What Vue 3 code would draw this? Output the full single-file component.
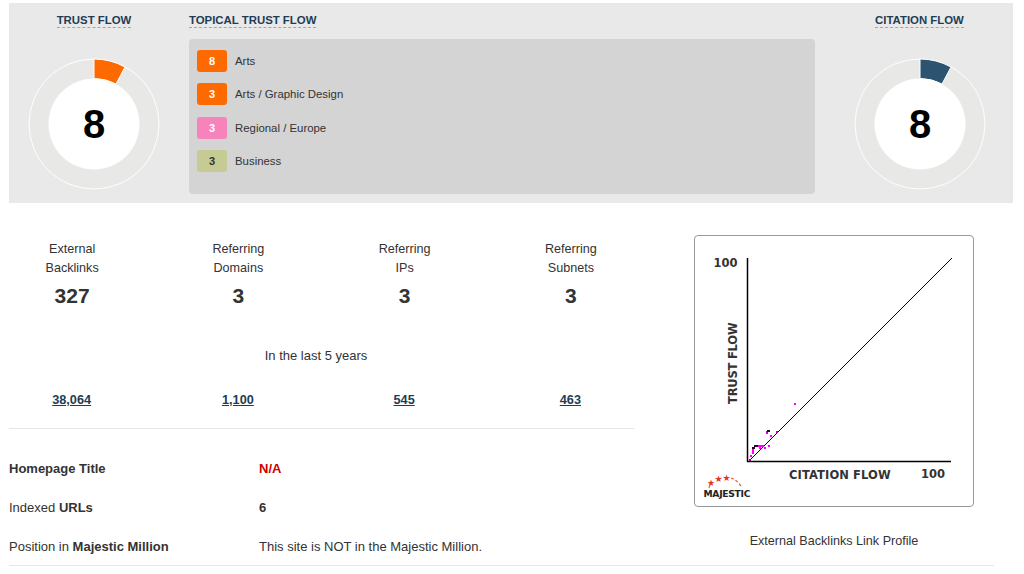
<script setup>
const topics = [
  { n: 8, label: 'Arts', cls: 'orange' },
  { n: 3, label: 'Arts / Graphic Design', cls: 'orange' },
  { n: 3, label: 'Regional / Europe', cls: 'pink' },
  { n: 3, label: 'Business', cls: 'olive' }
]
const stats = [
  { a: 'External', b: 'Backlinks', v: '327', old: '38,064' },
  { a: 'Referring', b: 'Domains', v: '3', old: '1,100' },
  { a: 'Referring', b: 'IPs', v: '3', old: '545' },
  { a: 'Referring', b: 'Subnets', v: '3', old: '463' }
]
const dots = [
  [794,403,2,2,'#ff00ff'],[766,431,2,3,'#d000d0'],[767,430,3,2,'#300030'],[770,435,2,2,'#ff00ff'],
  [776,431,2,2,'#c000c0'],[768,445,2,2,'#ff00ff'],[764,447,2,2,'#ff00ff'],[752,447,3,2,'#300030'],
  [754,445,4,2,'#300030'],[758,445,6,2,'#ff00ff'],[759,447,2,2,'#ff00ff'],[752,449,2,5,'#ff00ff'],
  [750,455,2,2,'#ff00ff'],[749,459,2,2,'#a000a0']
]
const stars = [[707,486],[714.500,482],[722.500,480.500]]
</script>

<template>
  <div class="page">
    <section class="panel">
      <div class="gauge">
        <span class="title">TRUST FLOW</span>
        <svg class="ring" viewBox="0 0 132 132" width="132" height="132">
          <circle cx="66" cy="66" r="65" fill="#e8e8e6" stroke="#fff" stroke-width="1" />
          <path d="M66 1 A65 65 0 0 1 97 9 L88 26 A46 46 0 0 0 66 20.500 Z" fill="#ff6a00" stroke="#fff" stroke-width="1" />
          <circle cx="66" cy="66" r="45.500" fill="#fff" />
        </svg>
        <span class="score">8</span>
      </div>
      <div class="topical">
        <span class="title">TOPICAL TRUST FLOW</span>
        <ul class="topics">
          <li v-for="t in topics" :key="t.label" class="topic">
            <span class="badge" :class="t.cls">{{ t.n }}</span>
            <span>{{ t.label }}</span>
          </li>
        </ul>
      </div>
      <div class="gauge shifted">
        <span class="title">CITATION FLOW</span>
        <svg class="ring" viewBox="0 0 132 132" width="132" height="132">
          <circle cx="66" cy="66" r="65" fill="#e8e8e6" stroke="#fff" stroke-width="1" />
          <path d="M66 1 A65 65 0 0 1 97 9 L88 26 A46 46 0 0 0 66 20.500 Z" fill="#2c5470" stroke="#fff" stroke-width="1" />
          <circle cx="66" cy="66" r="45.500" fill="#fff" />
        </svg>
        <span class="score">8</span>
      </div>
    </section>

    <section class="lower">
      <div class="left">
        <div class="stats">
          <div v-for="s in stats" :key="s.a + s.b" class="stat">
            <div>{{ s.a }}</div>
            <div>{{ s.b }}</div>
            <strong class="num">{{ s.v }}</strong>
          </div>
        </div>
        <p class="last">In the last 5 years</p>
        <div class="stats olds">
          <a v-for="s in stats" :key="s.old" class="old" href="#">{{ s.old }}</a>
        </div>
        <dl class="facts">
          <div class="fact"><dt><b>Homepage Title</b></dt><dd class="na">N/A</dd></div>
          <div class="fact"><dt>Indexed <b>URLs</b></dt><dd><b>6</b></dd></div>
          <div class="fact"><dt>Position in <b>Majestic Million</b></dt><dd>This site is NOT in the Majestic Million.</dd></div>
        </dl>
      </div>
      <div class="right">
        <div class="chart">
          <svg viewBox="694 235 280 272" width="280" height="272" class="plot">
            <text x="713.500" y="267" class="ax">100</text>
            <text x="921" y="478" class="ax">100</text>
            <text x="789" y="479" class="ax wide">CITATION FLOW</text>
            <text transform="translate(736.500 404) rotate(-90)" class="ax tight">TRUST FLOW</text>
            <path d="M747.500 258V461.500M747 461.500H951" fill="none" stroke="#000" stroke-width="1.500" />
            <path d="M748.500 461.500L951.500 258.500" fill="none" stroke="#000" stroke-width="1" shape-rendering="crispEdges" />
            <rect v-for="(d, i) in dots" :key="i" :x="d[0]" :y="d[1]" :width="d[2]" :height="d[3]" :fill="d[4]" />
            <path d="M731 478Q737 480 741 486" fill="none" stroke="#e2532a" stroke-width="1.200" stroke-dasharray="3 2" />
            <path d="M709 488L710 485" fill="none" stroke="#f08030" stroke-width="1.500" />
            <text v-for="(p, i) in stars" :key="i" :x="p[0]" :y="p[1]" class="star">★</text>
            <text x="703.500" y="497" class="logo">MAJESTIC</text>
          </svg>
        </div>
        <p class="caption">External Backlinks Link Profile</p>
      </div>
    </section>
  </div>
</template>

<style>
html, body { margin: 0; background: #fff; }
</style>

<style scoped>
.page {
  width: 1024px;
  height: 574px;
  overflow: hidden;
  box-sizing: border-box;
  padding: 3px 11px 0 9px;
  font: 13px/19px "Liberation Sans", Arial, sans-serif;
  color: #333;
}
.panel {
  height: 200px;
  background: #e9e9e9;
  display: grid;
  grid-template-columns: 170px 626px 188px;
  column-gap: 10px;
}
.title {
  font-size: 11.400px;
  line-height: 14px;
  font-weight: 700;
  color: #1e3d55;
  border-bottom: 1px dashed #a5a5a5;
  align-self: flex-start;
}
.gauge {
  position: relative;
  display: flex;
  flex-direction: column;
  align-items: center;
  padding-top: 10px;
}
.gauge .title { align-self: center; }
.shifted { padding-left: 1px; }
.ring { margin-top: 30px; display: block; }
.score {
  position: absolute;
  left: 0;
  right: 0;
  top: 98px;
  text-align: center;
  font-size: 40px;
  line-height: 46px;
  font-weight: 700;
  color: #000;
}
.shifted .score { left: 2px; }
.topical {
  display: flex;
  flex-direction: column;
  padding-top: 10px;
}
.topics {
  list-style: none;
  margin: 11px 0 0;
  padding: 11px 8px 0;
  box-sizing: border-box;
  width: 100%;
  height: 155px;
  background: #d4d4d4;
  border-radius: 4px;
}
.topic {
  display: flex;
  align-items: center;
  gap: 8px;
  height: 22px;
  margin-bottom: 11px;
  font-size: 11.400px;
}
.topic:nth-child(2) { margin-bottom: 12px; }
.badge {
  width: 30px;
  height: 22px;
  border-radius: 3px;
  display: flex;
  align-items: center;
  justify-content: center;
  font-size: 11px;
  font-weight: 700;
  color: #fff;
}
.orange { background: #ff6a00; }
.pink { background: #f783bb; }
.olive { background: #c6ca93; color: #333; }
.lower {
  display: grid;
  grid-template-columns: 625px 320px;
  column-gap: 40px;
  width: 985px;
  border-bottom: 1px solid #e6e6e6;
}
.stats {
  display: grid;
  grid-template-columns: repeat(4, 1fr);
  column-gap: 40px;
  text-align: center;
}
.stat { padding-top: 37px; font-size: 12.600px; }
.num {
  display: block;
  margin-top: 6px;
  font-size: 21px;
  line-height: 24px;
}
.last {
  margin: 38px 0 0;
  padding-right: 11px;
  text-align: center;
}
.olds {
  margin-top: 26px;
  padding-bottom: 18px;
  border-bottom: 1px solid #e6e6e6;
}
.old {
  padding-right: 1px;
  font-size: 12.700px;
  font-weight: 700;
  color: #1e3d55;
  text-decoration: underline;
}
.facts { margin: 0; padding-top: 20px; }
.fact {
  display: flex;
  height: 39px;
  align-items: flex-start;
  padding-top: 10px;
  box-sizing: border-box;
}
.fact:last-child { height: 38px; }
.fact dt { width: 250px; }
.fact dd { margin: 0; }
.na { color: #c00; font-weight: 700; }
.right {
  padding-top: 32px;
  text-align: center;
}
.chart {
  width: 280px;
  height: 272px;
  box-sizing: border-box;
  margin: 0 auto;
  border: 1px solid #999;
  border-radius: 4px;
  overflow: hidden;
}
.plot { display: block; margin: -1px; }
.ax {
  font: 700 11.500px "DejaVu Sans", Verdana, sans-serif;
  fill: #333;
}
.wide { letter-spacing: 0.1px; }
.tight { letter-spacing: -0.2px; }
.star { font: 9px "DejaVu Sans", sans-serif; fill: #e8321a; }
.logo { font: 700 9.200px "DejaVu Sans", sans-serif; fill: #222; letter-spacing: -0.3px; }
.caption { margin: 25px 0 0; font-size: 12.600px; }
</style>
